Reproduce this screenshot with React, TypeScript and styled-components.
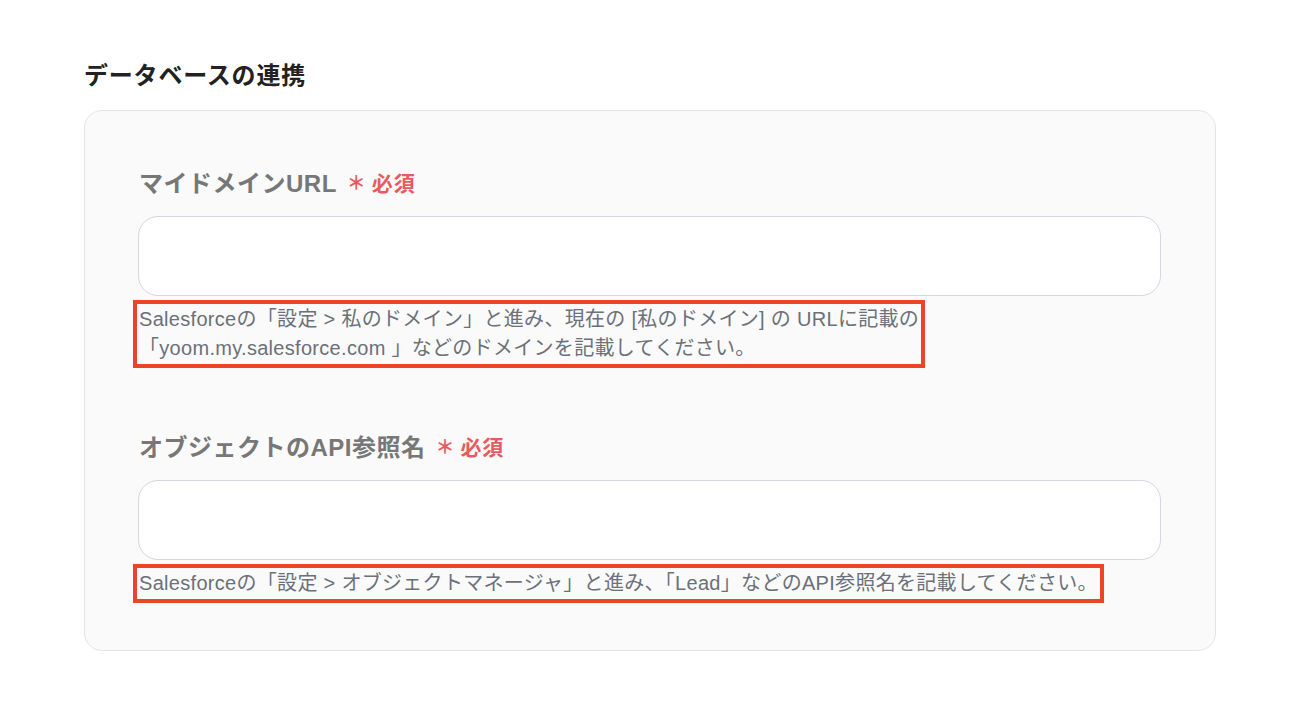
import styled, { createGlobalStyle } from "styled-components";

const GlobalStyle = createGlobalStyle`
  html, body {
    margin: 0;
    padding: 0;
    background: #ffffff;
  }
  body {
    font-family: "Liberation Sans", "Noto Sans CJK JP", sans-serif;
  }
`;

interface FieldProps {
  label: string;
  first?: boolean;
  children: React.ReactNode;
}

const Field: React.FC<FieldProps> = ({ label, first, children }) => (
  <StyledField $first={first}>
    <StyledLabel>
      {label}
      <StyledAsterisk>＊</StyledAsterisk>
      <StyledRequired>必須</StyledRequired>
    </StyledLabel>
    <StyledInput type="text" />
    <StyledHelp>{children}</StyledHelp>
  </StyledField>
);

const App = () => {
  return (
    <>
      <GlobalStyle />
      <StyledPage>
        <StyledTitle>データベースの連携</StyledTitle>
        <StyledCard>
          <Field label="マイドメインURL" first>
            Salesforceの「設定 &gt; 私のドメイン」と進み、現在の [私のドメイン] の URLに記載の
            <br />
            「yoom.my.salesforce.com 」などのドメインを記載してください。
          </Field>
          <Field label="オブジェクトのAPI参照名">
            Salesforceの「設定 &gt; オブジェクトマネージャ」と進み、「Lead」などのAPI参照名を記載してください。
          </Field>
        </StyledCard>
      </StyledPage>
    </>
  );
};

export default App;

const StyledPage = styled.main`
  padding: 60px 90px 0 84px;
`;

const StyledTitle = styled.h2`
  margin: 0 0 18px;
  font-size: 24px;
  line-height: 32px;
  font-weight: 700;
  letter-spacing: 0.8px;
  color: #222222;
`;

const StyledCard = styled.section`
  box-sizing: border-box;
  width: 1132px;
  padding: 56px 54px 47px 54px;
  background: #fafafa;
  border: 1px solid #e4e4e4;
  border-radius: 18px;
`;

const StyledField = styled.div<{ $first?: boolean }>`
  display: flex;
  flex-direction: column;
  align-items: flex-start;
  margin-top: ${(p) => (p.$first ? "0" : "63px")};
`;

const StyledLabel = styled.div`
  display: flex;
  align-items: center;
  font-size: 24px;
  line-height: 34px;
  font-weight: 700;
  letter-spacing: 0.5px;
  color: #777777;
`;

const StyledAsterisk = styled.span`
  margin-left: 10px;
  margin-right: 6px;
  font-size: 19px;
  letter-spacing: 0;
  color: #e85a5f;
`;

const StyledRequired = styled.span`
  font-size: 21px;
  letter-spacing: 0.8px;
  color: #e85a5f;
`;

const StyledInput = styled.input`
  box-sizing: border-box;
  width: 1023px;
  height: 80px;
  margin-top: 15px;
  margin-left: -1px;
  padding: 0 20px;
  background: #ffffff;
  border: 1px solid #d3d7de;
  border-radius: 20px;
  outline: none;
  font-size: 18px;
`;

const StyledHelp = styled.p`
  margin: 4px 0 0 -6px;
  padding: 1px 2px 1px 2px;
  font-size: 20px;
  line-height: 29px;
  letter-spacing: 0.3px;
  color: #6b7079;
  border: 4px solid #ea4429;
  white-space: nowrap;
`;
